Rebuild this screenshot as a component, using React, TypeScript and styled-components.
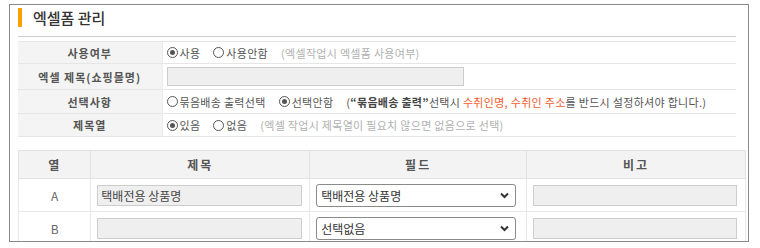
import React from "react";
import styled, { createGlobalStyle } from "styled-components";

const GlobalStyle = createGlobalStyle`
  html, body { margin: 0; padding: 0; background: #fff; }
  body { font-family: "Noto Sans CJK KR", "Noto Sans", sans-serif; color: #555; }
  * { box-sizing: border-box; }
`;

const Frame = styled.div`
  margin: 4px 0 0 9px;
  width: 740px;
  height: 238px;
  border: 1px solid #8a8a8a;
  overflow: hidden;
  padding-left: 8px;
`;

const TitleBar = styled.div`
  width: 718px;
  height: 32px;
  padding-top: 3px;
  display: flex;
  align-items: flex-start;
  gap: 11px;
  border-bottom: 1px solid #cfcfcf;
`;

const Accent = styled.span`
  display: block;
  width: 4px;
  height: 19px;
  background: #f7a000;
`;

const TitleText = styled.h1`
  margin: 0;
  font-size: 15px;
  line-height: 19px;
  font-weight: 500;
  color: #333;
`;

const InfoTable = styled.table`
  margin-top: 4px;
  width: 718px;
  border-collapse: collapse;
  border-top: 1px solid #e6e6e6;
  font-size: 11px;
`;

const Row = styled.tr<{ $h: number }>`
  height: ${(p) => p.$h}px;
  border-bottom: 1px solid #e6e6e6;
`;

const Label = styled.th`
  width: 144px;
  background: #f4f4f4;
  font-weight: 700;
  color: #555;
  letter-spacing: 1px;
  text-align: center;
  padding: 0;
  border-right: 1px solid #ececec;
`;

const Value = styled.td`
  padding: 0 0 0 4px;
`;

const Options = styled.div`
  display: flex;
  align-items: center;
  gap: 13px;
  white-space: nowrap;
  color: #555;
  letter-spacing: 0.3px;
`;

const RadioWrap = styled.span`
  display: inline-flex;
  align-items: center;
  gap: 2px;
`;

const Dot = styled.span<{ $on?: boolean }>`
  width: 11px;
  height: 11px;
  border-radius: 50%;
  border: 1px solid #555;
  background: #fff;
  display: inline-flex;
  align-items: center;
  justify-content: center;
  &::after {
    content: "";
    width: 5px;
    height: 5px;
    border-radius: 50%;
    background: ${(p) => (p.$on ? "#555" : "transparent")};
  }
`;

const Hint = styled.span`
  color: #b0b0b0;
`;

const Note = styled.span`
  color: #555;
`;

const Strong = styled.b`
  color: #444;
  font-weight: 700;
`;

const Red = styled.span`
  color: #f25a2c;
`;

const TextBox = styled.div<{ $w: number; $h?: number }>`
  width: ${(p) => p.$w}px;
  height: ${(p) => p.$h ?? 20}px;
  background: #efefef;
  border: 1px solid #cdcdcd;
  font-size: 12px;
  line-height: ${(p) => (p.$h ?? 20) - 2}px;
  padding-left: 3px;
  color: #444;
`;

const ColTable = styled.table`
  margin-top: 13px;
  width: 728px;
  border-collapse: collapse;
  border: 1px solid #e2e2e2;
  font-size: 12px;
`;

const HeadCell = styled.th<{ $w: number }>`
  width: ${(p) => p.$w}px;
  height: 28px;
  background: #f3f3f3;
  border: 1px solid #e2e2e2;
  font-weight: 700;
  color: #555;
  letter-spacing: 2px;
  text-align: center;
  padding: 0;
`;

const Cell = styled.td<{ $center?: boolean }>`
  height: 33px;
  border: 1px solid #e8e8e8;
  padding: 0 0 0 6px;
  text-align: ${(p) => (p.$center ? "center" : "left")};
  color: #666;
`;

const LetterCell = styled(Cell)`
  padding: 0;
`;

const SelectBox = styled.div`
  position: relative;
  width: 200px;
  height: 23px;
  border: 1px solid #8a8a8a;
  border-radius: 3px;
  background: #fff;
  font-size: 12px;
  line-height: 21px;
  padding-left: 4px;
  color: #333;
`;

const Chevron = styled.svg`
  position: absolute;
  right: 6px;
  top: 7px;
`;

function Radio({ on, children }: { on?: boolean; children: React.ReactNode }) {
  return (
    <RadioWrap>
      <Dot $on={on} />
      {children}
    </RadioWrap>
  );
}

function Select({ value }: { value: string }) {
  return (
    <SelectBox>
      {value}
      <Chevron width="9" height="7" viewBox="0 0 9 7">
        <path d="M1 1.5 L4.5 5 L8 1.5" fill="none" stroke="#333" strokeWidth="2" />
      </Chevron>
    </SelectBox>
  );
}

const rows = [
  { col: "A", title: "택배전용 상품명", field: "택배전용 상품명" },
  { col: "B", title: "", field: "선택없음" },
];

export default function App() {
  return (
    <>
      <GlobalStyle />
      <Frame>
        <TitleBar>
          <Accent />
          <TitleText>엑셀폼 관리</TitleText>
        </TitleBar>
        <InfoTable>
          <tbody>
            <Row $h={22}>
              <Label>사용여부</Label>
              <Value>
                <Options>
                  <Radio on>사용</Radio>
                  <Radio>사용안함</Radio>
                  <Hint>(엑셀작업시 엑셀폼 사용여부)</Hint>
                </Options>
              </Value>
            </Row>
            <Row $h={26}>
              <Label>엑셀 제목(쇼핑몰명)</Label>
              <Value>
                <TextBox $w={297} $h={19} />
              </Value>
            </Row>
            <Row $h={24}>
              <Label>선택사항</Label>
              <Value>
                <Options>
                  <Radio>묶음배송 출력선택</Radio>
                  <Radio on>선택안함</Radio>
                  <Note>
                    (<Strong>“묶음배송 출력”</Strong>선택시 <Red>수취인명, 수취인 주소</Red>를 반드시 설정하셔야 합니다.)
                  </Note>
                </Options>
              </Value>
            </Row>
            <Row $h={23}>
              <Label>제목열</Label>
              <Value>
                <Options>
                  <Radio on>있음</Radio>
                  <Radio>없음</Radio>
                  <Hint>(엑셀 작업시 제목열이 필요치 않으면 없음으로 선택)</Hint>
                </Options>
              </Value>
            </Row>
          </tbody>
        </InfoTable>
        <ColTable>
          <thead>
            <tr>
              <HeadCell $w={73}>열</HeadCell>
              <HeadCell $w={219}>제목</HeadCell>
              <HeadCell $w={217}>필드</HeadCell>
              <HeadCell $w={219}>비고</HeadCell>
            </tr>
          </thead>
          <tbody>
            {rows.map((r) => (
              <tr key={r.col}>
                <LetterCell $center>{r.col}</LetterCell>
                <Cell>
                  <TextBox $w={205} $h={21}>{r.title}</TextBox>
                </Cell>
                <Cell>
                  <Select value={r.field} />
                </Cell>
                <Cell>
                  <TextBox $w={204} $h={21} />
                </Cell>
              </tr>
            ))}
          </tbody>
        </ColTable>
      </Frame>
    </>
  );
}
